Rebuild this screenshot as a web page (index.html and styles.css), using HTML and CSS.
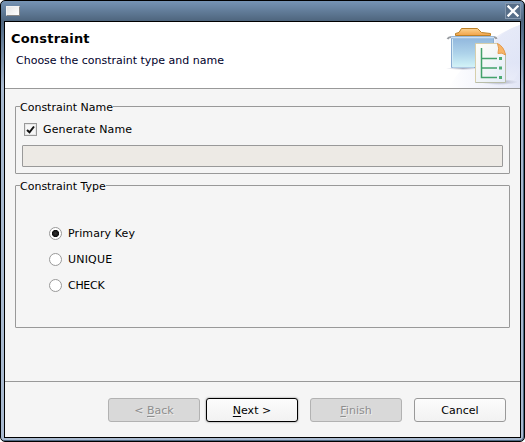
FILE: index.html
```html
<!DOCTYPE html>
<html lang="en">
<head>
<meta charset="utf-8">
<title>Constraint</title>
<link rel="stylesheet" href="styles.css">
</head>
<body>
<div class="window">
  <div class="titlebar">
    <span class="window-icon"></span>
    <span class="close"><svg width="12" height="12" viewBox="0 0 12 12"><path d="M1.500 1.500 10.500 10.500M10.500 1.500 1.500 10.500" stroke="#fff" stroke-width="2.300" stroke-linecap="square"/></svg></span>
  </div>
  <div class="client">
    <header class="header">
      <div class="heading">
        <h1>Constraint</h1>
        <p>Choose the constraint type and name</p>
      </div>
      <svg class="banner" width="80" height="66" viewBox="440 22 80 66">
        <defs>
          <linearGradient id="folder" x1="0" y1="0" x2="0" y2="1"><stop offset="0" stop-color="#8fb5dc"/><stop offset=".55" stop-color="#aed3ea"/><stop offset="1" stop-color="#d3f5f8"/></linearGradient>
          <linearGradient id="tab" x1="0" y1="0" x2="0" y2="1"><stop offset="0" stop-color="#fbd391"/><stop offset="1" stop-color="#f2a247"/></linearGradient>
          <linearGradient id="page" x1="0" y1="0" x2="1" y2="1"><stop offset="0" stop-color="#fffef8"/><stop offset="1" stop-color="#e4ecf8"/></linearGradient>
          <linearGradient id="glow" x1="0" y1="0" x2="1" y2="0"><stop offset="0" stop-color="#fff"/><stop offset=".6" stop-color="#f0f2fb"/><stop offset="1" stop-color="#e2e6f6"/></linearGradient>
          <linearGradient id="sweep" x1="0" y1="0" x2="0" y2="1"><stop offset="0" stop-color="#e6eaf8"/><stop offset=".6" stop-color="#dfe4f6"/><stop offset="1" stop-color="#eef0fa"/></linearGradient>
          <radialGradient id="shade"><stop offset="0" stop-color="#8e94ac" stop-opacity=".75"/><stop offset="1" stop-color="#8e94ac" stop-opacity="0"/></radialGradient>
        </defs>
        <path d="M520 25Q480 38 448 88H520Z" fill="url(#glow)"/>
        <path d="M520 25Q503 31 495 42L505 88Q514 82 520 70Z" fill="url(#sweep)" opacity=".75"/>
        <ellipse cx="463" cy="68.500" rx="17" ry="1.500" fill="url(#shade)"/>
        <ellipse cx="499" cy="82" rx="19" ry="3" fill="url(#shade)"/>
        <path d="M447.500 39q1-2 4-2M493 37q3 0 3.500 2" fill="none" stroke="#999da2" stroke-width="2"/>
        <path d="M455.500 35.500V33.500L459 32.500L461.500 28.500H477.500L481.500 32.500L490.500 33.500V35.500Z" fill="url(#tab)" stroke="#bd8127"/>
        <path d="M451.500 36.500H493.500V67.500H451.500Z" fill="url(#folder)" stroke="#88abd1"/>
        <path d="M451 37.500H494" stroke="#cbdff2" stroke-width="1.500"/>
        <path d="M452.500 39V67H474" fill="none" stroke="#d5ebf5"/>
        <path d="M475.500 43.500H497.500L505.500 54V82.500H475.500Z" fill="url(#page)" stroke="#b8bda9"/>
        <path d="M475.500 82V43.500H497" fill="none" stroke="#d7cfac"/>
        <path d="M497.500 43.500Q504 46.500 505.500 55Q502 52 498 53.500Q499.500 48 497.500 43.500Z" fill="#f8b568" stroke="#e59a4c"/>
        <path d="M481.500 48V77.500H497M482 58.500H497M482 68H497" fill="none" stroke="#42a16a" stroke-width="1.500"/>
        <path d="M499 57h3v3h-3zM499 66.500h3v3h-3zM499 76h3v3h-3z" fill="#4cac73"/>
      </svg>
    </header>
    <main class="body">
      <fieldset class="group name-group">
        <legend>Constraint Name</legend>
        <label class="check"><svg width="13" height="13" viewBox="0 0 13 13"><rect x=".5" y=".5" width="12" height="12" fill="#fff" stroke="#999"/><rect x="1.500" y="1.500" width="10" height="10" fill="#f7f7f7" stroke="#e8e8e8"/><path d="M3 7 5.500 9.300 10 3.500" fill="none" stroke="#111" stroke-width="2"/></svg><span class="wide">Generate Name</span></label>
        <div class="field"></div>
      </fieldset>
      <fieldset class="group type-group">
        <legend>Constraint Type</legend>
        <label class="radio"><i class="dot on"></i><span class="key">Primary Key</span></label>
        <label class="radio"><i class="dot"></i><span class="unique">UNIQUE</span></label>
        <label class="radio"><i class="dot"></i><span class="narrow">CHECK</span></label>
      </fieldset>
    </main>
    <footer class="footer">
      <button class="btn" disabled>&lt; <u>B</u>ack</button>
      <button class="btn default"><u>N</u>ext &gt;</button>
      <button class="btn finish" disabled><u>F</u>inish</button>
      <button class="btn cancel">Cancel</button>
    </footer>
  </div>
</div>
</body>
</html>
```
FILE: styles.css
```css
* { box-sizing: border-box; }
html { background: #fff; }
body { margin: 0; font: 11px/14px "DejaVu Sans", sans-serif; color: #000; }
.window {
  width: 525px; height: 442px; border: 1px solid #000; border-radius: 5px;
  background: linear-gradient(#7694b5, #4e657d 20px, #566f8a 28px, #a9bad0 85px, #a9bad0);
  box-shadow: inset -1px -1px #506a84;
  padding: 0 3px 3px; display: flex; flex-direction: column;
}
.titlebar { height: 20px; display: flex; align-items: center; justify-content: space-between; padding: 0 0 0 2px; }
.window-icon { width: 14px; height: 10px; background: linear-gradient(135deg, #e4e4e4, #fff); border: 1px solid #f4f4f4; border-right-color: #888; border-bottom-color: #888; }
.close { width: 16px; height: 16px; border: 1px solid #8497ad; display: flex; align-items: center; justify-content: center; background: #576e88; }
.client { flex: 1; border: 1px solid #000; background: #f5f5f5; display: flex; flex-direction: column; }
.header { height: 67px; background: #fff; border-bottom: 1px solid #999; display: flex; justify-content: space-between; }
.heading { padding: 9px 0 0 6px; }
h1 { margin: 0; font-size: 13px; line-height: 16px; letter-spacing: .2px; }
p { margin: 7px 0 0 5px; color: #00002a; }
.banner { display: block; }
.body { flex: 1; padding: 11px 10px 0; }
.group { margin: 0; min-width: 0; border: 1px solid #999; border-radius: 1px; padding: 0 6px; width: 495px; }
legend { margin-left: -2px; padding: 0; height: 13px; line-height: 16px; }
.name-group { height: 74px; }
.check { display: flex; align-items: center; gap: 6px; height: 15px; margin: 9px 0 0 2px; }
.wide { letter-spacing: .15px; }
.field { height: 22px; margin-top: 8px; background: #edeae5; border: 1px solid #999; border-radius: 1px; width: 481px; }
.type-group { height: 149px; margin-top: 5px; }
.radio { display: flex; align-items: center; gap: 6px; height: 26px; margin-left: 27px; }
.radio span { padding-top: 2px; }
.key { letter-spacing: .1px; }
.unique { letter-spacing: .2px; }
.narrow { letter-spacing: -.3px; }
legend + .radio { margin-top: 28px; }
.dot { width: 13px; height: 13px; border: 1px solid #999; border-radius: 50%; background: #fff; }
.dot.on { background: radial-gradient(circle at 5.5px 5.5px, #333 0, #111 3.2px, #fff 4px); }
.footer { height: 56px; border-top: 1px solid #999; padding: 16px 14px 0 0; display: flex; justify-content: flex-end; }
.btn { width: 92px; height: 24px; margin-left: 6px; padding: 2px 0 0; font: inherit; color: #000; border: 1px solid #999; border-radius: 3px; background: linear-gradient(#fcfcfc, #f2f2f2); }
.btn:disabled { color: #8e8e8e; background: #d9d9d9; border-color: #b2b2b2; text-shadow: 1px 1px #ededed; }
.btn.default { border-color: #000; box-shadow: 0 0 2px #777; }
.btn.finish, .btn.cancel { margin-left: 12px; }
u { text-underline-offset: 2px; text-decoration-thickness: 1px; text-decoration-skip-ink: none; }
```
